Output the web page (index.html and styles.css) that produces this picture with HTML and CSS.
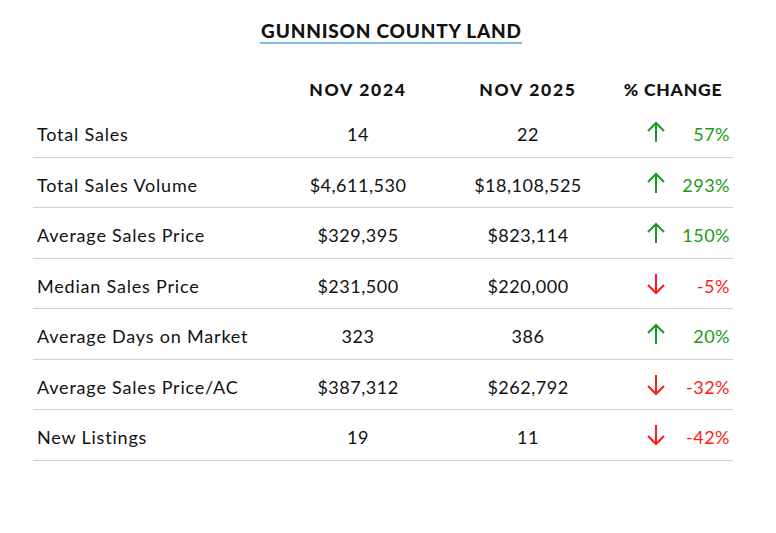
FILE: index.html
```html
<!DOCTYPE html>
<html>
<head>
<meta charset="utf-8">
<link rel="stylesheet" href="styles.css">
</head>
<body>
<div class="page">
  <div class="title-wrap"><h1 class="title">GUNNISON COUNTY LAND</h1></div>
  <div class="table">
    <div class="row head">
      <div class="c label"></div>
      <div class="c num">NOV 2024</div>
      <div class="c num">NOV 2025</div>
      <div class="c chg-head">% CHANGE</div>
    </div>
    <div class="row">
      <div class="c label">Total Sales</div>
      <div class="c num">14</div>
      <div class="c num">22</div>
      <div class="c chg up"><svg class="arrow" viewBox="0 0 20 22"><path d="M10 21V2M2 10L10 2L18 10"/></svg><span class="pct">57%</span></div>
    </div>
    <div class="row">
      <div class="c label">Total Sales Volume</div>
      <div class="c num">$4,611,530</div>
      <div class="c num">$18,108,525</div>
      <div class="c chg up"><svg class="arrow" viewBox="0 0 20 22"><path d="M10 21V2M2 10L10 2L18 10"/></svg><span class="pct">293%</span></div>
    </div>
    <div class="row">
      <div class="c label">Average Sales Price</div>
      <div class="c num">$329,395</div>
      <div class="c num">$823,114</div>
      <div class="c chg up"><svg class="arrow" viewBox="0 0 20 22"><path d="M10 21V2M2 10L10 2L18 10"/></svg><span class="pct">150%</span></div>
    </div>
    <div class="row">
      <div class="c label">Median Sales Price</div>
      <div class="c num">$231,500</div>
      <div class="c num">$220,000</div>
      <div class="c chg down"><svg class="arrow" viewBox="0 0 20 22"><path d="M10 1V20M2 12L10 20L18 12"/></svg><span class="pct">-5%</span></div>
    </div>
    <div class="row">
      <div class="c label">Average Days on Market</div>
      <div class="c num">323</div>
      <div class="c num">386</div>
      <div class="c chg up"><svg class="arrow" viewBox="0 0 20 22"><path d="M10 21V2M2 10L10 2L18 10"/></svg><span class="pct">20%</span></div>
    </div>
    <div class="row">
      <div class="c label">Average Sales Price/AC</div>
      <div class="c num">$387,312</div>
      <div class="c num">$262,792</div>
      <div class="c chg down"><svg class="arrow" viewBox="0 0 20 22"><path d="M10 1V20M2 12L10 20L18 12"/></svg><span class="pct">-32%</span></div>
    </div>
    <div class="row">
      <div class="c label">New Listings</div>
      <div class="c num">19</div>
      <div class="c num">11</div>
      <div class="c chg down"><svg class="arrow" viewBox="0 0 20 22"><path d="M10 1V20M2 12L10 20L18 12"/></svg><span class="pct">-42%</span></div>
    </div>
  </div>
</div>
</body>
</html>
```
FILE: styles.css
```css
html, body {
  margin: 0;
  padding: 0;
  background: #fff;
}
body {
  font-family: Lato, "Open Sans", sans-serif;
  color: #111;
  width: 776px;
  height: 533px;
}
.page {
  padding-top: 21px;
}
.title-wrap {
  text-align: center;
  padding-left: 6px;
}
.title {
  display: inline-block;
  margin: 0;
  font-size: 19px;
  font-weight: 900;
  line-height: 20px;
  letter-spacing: 0.8px;
  border-bottom: 2px solid #7fbde3;
  padding: 0 0 1px 1px;
}
.table {
  margin: 27px 0 0 33px;
  width: 700px;
}
.row {
  display: grid;
  grid-template-columns: 250px 150px 190px 110px;
  align-items: center;
  height: 50.5px;
  box-sizing: border-box;
  border-bottom: 1.5px solid #d0d0d0;
  padding-top: 5px;
  font-size: 18px;
  letter-spacing: 0.8px;
  white-space: nowrap;
}
.c.num {
  text-align: center;
  letter-spacing: 0.5px;
}
.row.head {
  height: 36px;
  border-bottom: none;
  font-weight: 900;
  font-size: 17.5px;
  padding-top: 0;
}
.row.head .c.num {
  letter-spacing: 1.7px;
}
.c.label {
  padding-left: 4px;
}
.chg-head {
  text-align: center;
  padding-right: 10px;
  letter-spacing: 0.8px;
}
.chg {
  display: flex;
  align-items: center;
  padding-left: 23px;
  padding-right: 3px;
  letter-spacing: 0.5px;
}
.arrow {
  width: 20px;
  height: 22px;
  fill: none;
  stroke-width: 2;
  margin-top: -4px;
}
.up .arrow { stroke: #1b9a1b; }
.down .arrow { stroke: #ff1a1a; }
.pct {
  margin-left: auto;
}
.up .pct { color: #1b9a1b; }
.down .pct { color: #ff1a1a; }
```
